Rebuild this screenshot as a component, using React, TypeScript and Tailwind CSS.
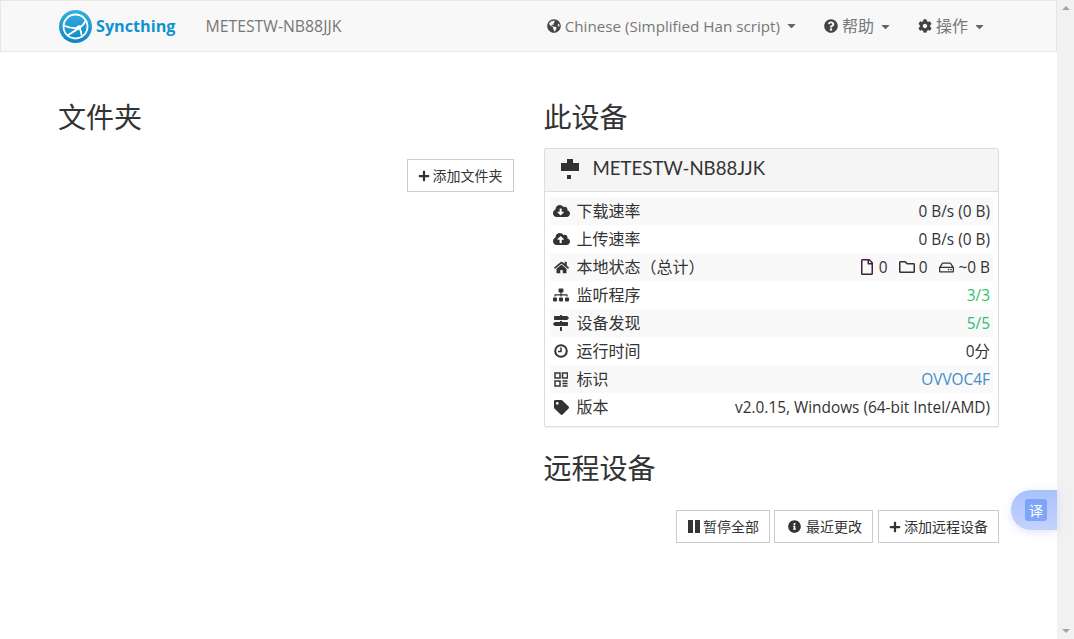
import type { ReactNode } from "react";
import {
  FaCaretDown,
  FaCloudDownloadAlt,
  FaCloudUploadAlt,
  FaCog,
  FaGlobeAmericas,
  FaHome,
  FaInfoCircle,
  FaMapSigns,
  FaPlus,
  FaQuestionCircle,
  FaRegFile,
  FaRegFolder,
  FaRegHdd,
  FaSitemap,
  FaTag,
} from "react-icons/fa";

const Logo = () => (
  <svg width="33" height="33" viewBox="0 0 33 33" className="shrink-0">
    <defs>
      <linearGradient id="logoFill" x1="0" y1="0" x2="0" y2="1">
        <stop offset="0" stopColor="#35b0de" />
        <stop offset="1" stopColor="#0e85c5" />
      </linearGradient>
    </defs>
    <circle cx="16.5" cy="16.5" r="16.5" fill="url(#logoFill)" />
    <g fill="none" stroke="#fff" strokeWidth="1.8">
      <circle cx="16.5" cy="16.5" r="12" />
      <path d="M4.8 15.5c5 2.5 10 3.2 15 2 2.500-.7 5-3 7-7" />
      <path d="M20 17.500c1.500 2 2.500 4.500 2.600 8" />
      <path d="M20 17.500c-3 3-6.500 5-11 7.500" />
    </g>
    <circle cx="20" cy="17.500" r="2.200" fill="#fff" />
  </svg>
);

const Identicon = () => (
  <svg width="18" height="20" viewBox="0 0 18 20" fill="#333" className="shrink-0">
    <rect x="6" y="0" width="6" height="4" />
    <rect x="0" y="4" width="18" height="8" />
    <rect x="6" y="16" width="4" height="4" />
  </svg>
);

const ClockIcon = () => (
  <svg width="14" height="14" viewBox="0 0 14 14" fill="none" stroke="#333">
    <circle cx="7" cy="7" r="5.800" strokeWidth="2" />
    <path d="M7 3.500V7.500H4" strokeWidth="1.500" />
  </svg>
);

const QrIcon = () => (
  <svg width="14" height="15" viewBox="0 0 14 15" fill="none" stroke="#333" strokeWidth="1.500">
    <rect x="1" y="1" width="5" height="5" />
    <rect x="8.500" y="1" width="5" height="5" />
    <rect x="1" y="9" width="5" height="5" />
    <path d="M8.500 9h5M8.500 11.500h5M8.500 14h5" />
  </svg>
);

const PauseIcon = () => (
  <svg width="12" height="13" viewBox="0 0 12 13" fill="#333" className="mr-[3px]">
    <rect x="0" y="0" width="5" height="13" />
    <rect x="7" y="0" width="5" height="13" />
  </svg>
);

const NavMenu = ({ icon, label, cjk }: { icon: ReactNode; label: string; cjk?: boolean }) => (
  <div className="flex items-center text-[#777]">
    <span className="mr-[4px] text-[14px] text-[#444]">{icon}</span>
    <span className={cjk ? "text-[16px]" : "text-[15.2px]"}>{label}</span>
    <FaCaretDown className="ml-[5px] text-[13px] text-[#666]" />
  </div>
);

const StatRow = ({
  icon,
  label,
  striped,
  children,
}: {
  icon: ReactNode;
  label: string;
  striped?: boolean;
  children: ReactNode;
}) => (
  <div
    className={`flex h-[28px] items-center justify-between pl-[3px] pr-[3px] text-[15.4px] ${
      striped ? "bg-[#f9f9f9]" : ""
    }`}
  >
    <div className="flex items-center">
      <span className="flex w-[17px] justify-center text-[15px] text-[#333]">{icon}</span>
      <span className="ml-[7px] text-[16px]">{label}</span>
    </div>
    <div className="flex items-center pt-[1px]">{children}</div>
  </div>
);

const ActionButton = ({
  icon,
  label,
  className = "",
}: {
  icon: ReactNode;
  label: string;
  className?: string;
}) => (
  <button
    className={`flex h-[33px] items-center border border-[#ccc] bg-white pl-[10px] pr-[10px] text-[14px] text-[#333] ${className}`}
  >
    {icon}
    {label}
  </button>
);

export default function App() {
  return (
    <div className="relative flex h-[639px] w-[1074px] overflow-hidden bg-white font-['Open_Sans','Noto_Sans_CJK_SC',sans-serif] text-[#333]">
      <div className="w-[1057px]">
        <nav className="flex h-[52px] items-center justify-between border border-[#e7e7e7] bg-[#f8f8f8] pl-[58px] pr-[70px]">
          <div className="flex items-center">
            <Logo />
            <span className="ml-[4px] text-[16.2px] font-bold text-[#0f92d0]">Syncthing</span>
            <span className="ml-[30px] pt-[1px] text-[15.8px] text-[#777]">METESTW-NB88JJK</span>
          </div>
          <div className="flex items-center gap-[26px]">
            <NavMenu icon={<FaGlobeAmericas />} label="Chinese (Simplified Han script)" />
            <NavMenu cjk icon={<FaQuestionCircle />} label="帮助" />
            <NavMenu cjk icon={<FaCog />} label="操作" />
          </div>
        </nav>

        <main className="mx-auto mt-[44px] grid w-[941px] grid-cols-2 gap-[30px]">
          <section>
            <h1 className="text-[28px] leading-[42px]">文件夹</h1>
            <div className="mt-[21px] flex justify-end">
              <ActionButton icon={<FaPlus className="mr-[3px] text-[12px]" />} label="添加文件夹" />
            </div>
          </section>

          <section>
            <h1 className="text-[28px] leading-[42px]">此设备</h1>
            <div className="mt-[10px] rounded-[2px] border border-[#ddd] shadow-[0_1px_1px_rgba(0,0,0,0.05)]">
              <div className="flex h-[43px] items-center border-b border-[#ddd] bg-[#f5f5f5] pb-[3px] pl-[16px] text-[18.65px]">
                <Identicon />
                <span className="ml-[14px] font-['Lato','Open_Sans',sans-serif]">METESTW-NB88JJK</span>
              </div>
              <div className="px-[5px] pb-[5px] pt-[5px]">
                <StatRow striped icon={<FaCloudDownloadAlt className="text-[18px]" />} label="下载速率">0 B/s (0 B)</StatRow>
                <StatRow icon={<FaCloudUploadAlt className="text-[18px]" />} label="上传速率">0 B/s (0 B)</StatRow>
                <StatRow striped icon={<FaHome />} label="本地状态（总计）">
                  <FaRegFile className="mr-[4px] text-[16px] text-[#40213f]" />0
                  <FaRegFolder className="ml-[11px] mr-[4px] text-[16px]" />0
                  <FaRegHdd className="ml-[12px] mr-[4px] text-[15px]" />~0 B
                </StatRow>
                <StatRow icon={<FaSitemap className="text-[16px]" />} label="监听程序">
                  <span className="text-[#2fbf71]">3/3</span>
                </StatRow>
                <StatRow striped icon={<FaMapSigns className="text-[16px]" />} label="设备发现">
                  <span className="text-[#2fbf71]">5/5</span>
                </StatRow>
                <StatRow icon={<ClockIcon />} label="运行时间">0分</StatRow>
                <StatRow striped icon={<QrIcon />} label="标识">
                  <span className="text-[#428bca]">OVVOC4F</span>
                </StatRow>
                <StatRow icon={<FaTag />} label="版本">v2.0.15, Windows (64-bit Intel/AMD)</StatRow>
              </div>
            </div>
            <h1 className="mt-[20px] text-[28px] leading-[42px]">远程设备</h1>
            <div className="mt-[21px] flex justify-end gap-[4px]">
              <ActionButton className="pl-[11px]" icon={<PauseIcon />} label="暂停全部" />
              <ActionButton icon={<FaInfoCircle className="ml-[3px] mr-[5px] text-[13px]" />} label="最近更改" />
              <ActionButton className="ml-[1px]" icon={<FaPlus className="mr-[3px] text-[12px]" />} label="添加远程设备" />
            </div>
          </section>
        </main>
      </div>

      <div className="flex w-[17px] flex-col items-center justify-between bg-[#f1f1f1] py-[6px]">
        <div className="border-x-[4px] border-b-[4px] border-x-transparent border-b-[#a3a3a3]" />
        <div className="border-x-[4px] border-t-[4px] border-x-transparent border-t-[#a3a3a3]" />
      </div>

      <div className="absolute left-[1011px] top-[490px] flex h-[40px] w-[46px] items-center rounded-l-[20px] bg-gradient-to-b from-[#a9c1fb] to-[#c4d2fd] pl-[14px] shadow-[0_2px_8px_rgba(120,150,240,0.25)]">
        <span className="flex h-[22px] w-[22px] items-center justify-center rounded-[3px] bg-[#7ea6f7] text-[14px] text-white">
          译
        </span>
      </div>
    </div>
  );
}
